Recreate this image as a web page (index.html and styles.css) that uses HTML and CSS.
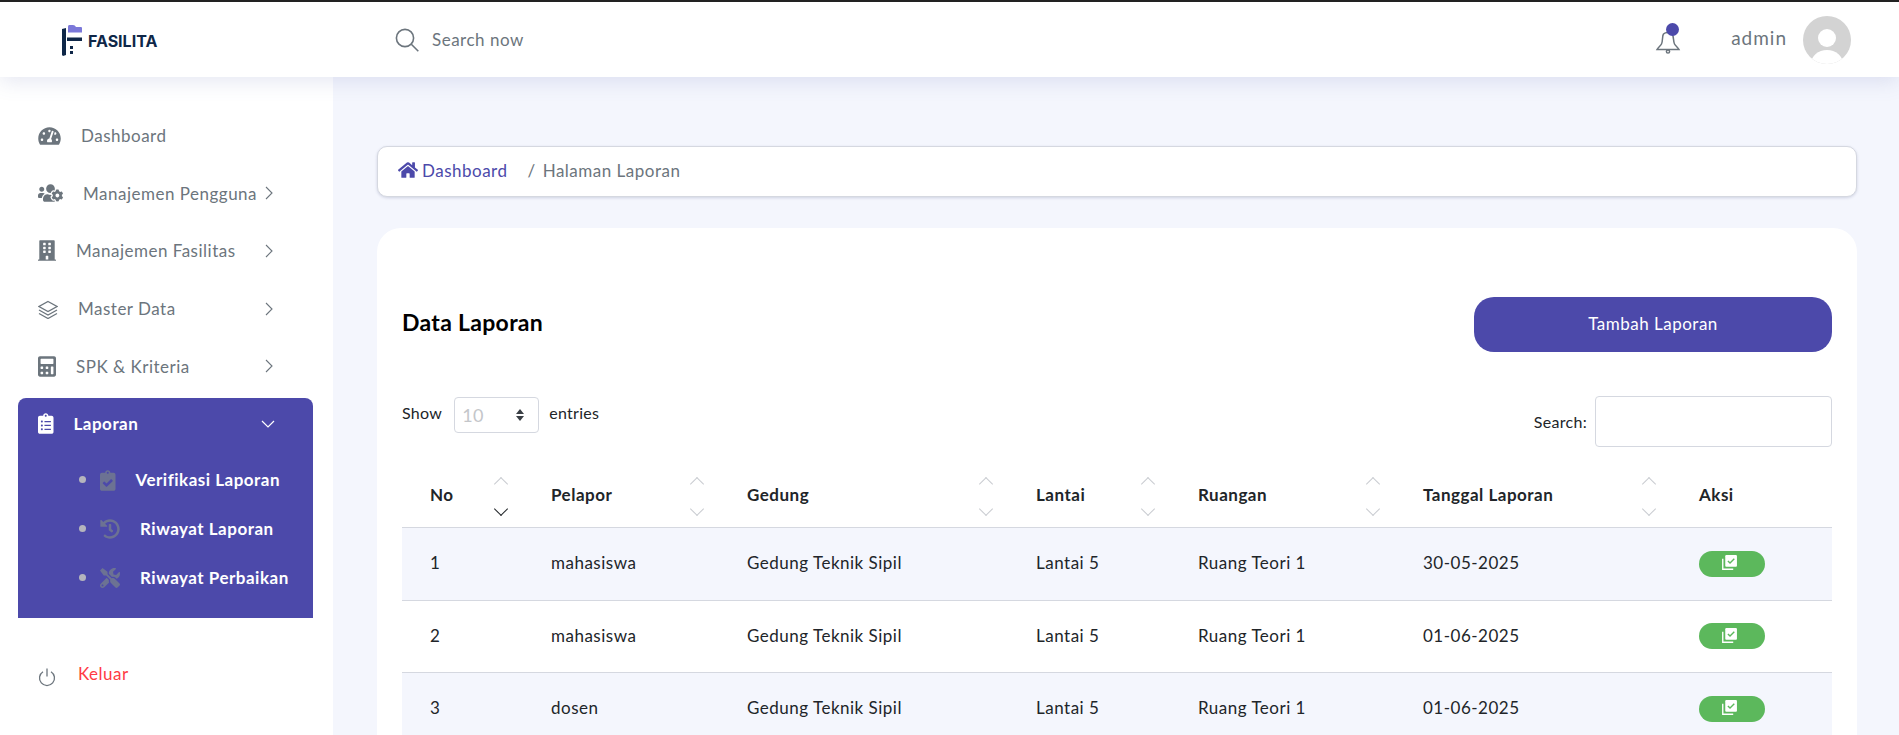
FILE: index.html
```html
<!DOCTYPE html>
<html lang="id">
<head>
<meta charset="utf-8">
<title>Data Laporan</title>
<link rel="stylesheet" href="styles.css">
</head>
<body>
<svg class="defs" aria-hidden="true">
  <defs>
    <symbol id="i-home" viewBox="0 0 576 512"><path d="M280.37 148.26L96 300.11V464a16 16 0 0 0 16 16l112.06-.29a16 16 0 0 0 15.92-16V368a16 16 0 0 1 16-16h64a16 16 0 0 1 16 16v95.64a16 16 0 0 0 16 16.05L464 480a16 16 0 0 0 16-16V300L295.67 148.26a12.19 12.19 0 0 0-15.3 0zM571.6 251.47L488 182.56V44.05a12 12 0 0 0-12-12h-56a12 12 0 0 0-12 12v72.61L318.47 43a48 48 0 0 0-61 0L4.34 251.47a12 12 0 0 0-1.6 16.9l25.5 31A12 12 0 0 0 45.15 301l235.22-193.74a12.19 12.19 0 0 1 15.3 0L530.9 301a12 12 0 0 0 16.9-1.6l25.5-31a12 12 0 0 0-1.7-16.93z"/></symbol>
    <symbol id="i-chev" viewBox="0 0 8 14"><path d="M1 1l6 6-6 6" fill="none" stroke="currentColor" stroke-width="1.1"/></symbol>
    <symbol id="i-check" viewBox="0 0 16 16"><path d="M1 4.500h1.300v9.200h9.200V15H1z" fill="#fff"/><rect x="4" y="1" width="11" height="11" rx="1" fill="#fff"/><path d="M6.500 6.500l2 2 4-4" fill="none" stroke="#5cb85c" stroke-width="1.300"/></symbol>
  </defs>
</svg>

<header class="topbar">
  <div class="brand">
    <svg class="brand-mark" viewBox="0 0 22 34"><path d="M8 2h4a4 4 0 0 1 3 2h5a1 1 0 0 1 1 1v4.500H7V4a2 2 0 0 1 1-2z" fill="#7b78d9"/><path d="M1 6l4-1v27l-3 1-1-1zM6 14.500h15v3.500H6zM9 23h3v3H9zM9 28h3v3H9z" fill="#0f2748"/></svg>
    <span class="brand-name">FASILITA</span>
  </div>
  <div class="search-box">
    <svg class="search-icon" viewBox="0 0 24 24"><circle cx="10" cy="10" r="8.6"/><path d="M16.3 16.3l7 7"/></svg>
    <span>Search now</span>
  </div>
  <div class="bell">
    <svg class="bell-icon" viewBox="0 0 24 24"><path d="M7.500 5C6 7 7 12 5.500 15 4.500 17 2 18.500 1 20.500h22c-1-2-3.500-3.500-4.500-5.500C17 12 18 7 16 5c-2-2-6.500-2-8.500 0z"/><circle cx="12" cy="22.500" r="1.600"/></svg>
    <span class="bell-dot"></span>
  </div>
  <span class="user-name">admin</span>
  <svg class="avatar" viewBox="0 0 48 48"><defs><clipPath id="av"><circle cx="24" cy="24" r="24"/></clipPath></defs><circle cx="24" cy="24" r="24" fill="#d3d3d3"/><g clip-path="url(#av)" fill="#fff"><circle cx="24" cy="22" r="9"/><ellipse cx="24" cy="48" rx="16" ry="14"/></g></svg>
</header>

<div class="layout">
  <aside class="sidebar">
    <nav>
      <a class="nav-item"><svg class="ic w23" viewBox="0 0 576 512"><path d="M288 32C128.94 32 0 160.94 0 320c0 52.8 14.25 102.26 39.06 144.8 5.61 9.62 16.3 15.2 27.44 15.2h443c11.14 0 21.83-5.58 27.44-15.2C561.75 422.26 576 372.8 576 320c0-159.06-128.94-288-288-288zm0 64c14.71 0 26.58 10.13 30.32 23.65-1.11 2.26-2.64 4.23-3.45 6.67l-9.22 27.67c-5.13 3.49-10.97 6.01-17.64 6.01-17.67 0-32-14.33-32-32S270.33 96 288 96zM96 384c-17.67 0-32-14.33-32-32s14.33-32 32-32 32 14.33 32 32-14.33 32-32 32zm48-160c-17.67 0-32-14.33-32-32s14.33-32 32-32 32 14.33 32 32-14.33 32-32 32zm246.77-72.41l-61.33 184C343.13 347.33 352 364.54 352 384c0 11.72-3.38 22.55-8.88 32H232.88c-5.5-9.45-8.88-20.28-8.88-32 0-33.94 26.5-61.43 59.9-63.59l61.34-184.01c4.17-12.56 17.73-19.45 30.36-15.17 12.57 4.19 19.35 17.79 15.17 30.36zm14.66 57.2l15.52-46.55c3.47-1.29 7.13-2.23 11.05-2.23 17.67 0 32 14.33 32 32s-14.33 32-32 32c-11.38-.01-20.89-6.28-26.57-15.22zM480 384c-17.67 0-32-14.33-32-32s14.33-32 32-32 32 14.33 32 32-14.33 32-32 32z"/></svg><span>Dashboard</span></a>
      <a class="nav-item"><svg class="ic w25" viewBox="0 0 640 512"><path d="M610.5 341.3c2.6-14.1 2.6-28.5 0-42.6l25.8-14.9c3-1.7 4.3-5.2 3.3-8.5-6.7-21.6-18.2-41.2-33.2-57.4-2.3-2.5-6-3.1-9-1.4l-25.8 14.9c-10.9-9.3-23.4-16.5-36.9-21.3v-29.8c0-3.4-2.4-6.4-5.7-7.1-22.3-5-45-4.8-66.2 0-3.3.7-5.7 3.7-5.7 7.1v29.8c-13.5 4.8-26 12-36.9 21.3l-25.8-14.9c-2.9-1.7-6.7-1.1-9 1.4-15 16.2-26.5 35.8-33.2 57.4-1 3.3.4 6.8 3.3 8.5l25.8 14.9c-2.6 14.1-2.6 28.5 0 42.6l-25.8 14.9c-3 1.7-4.3 5.2-3.3 8.5 6.7 21.6 18.2 41.1 33.2 57.4 2.3 2.5 6 3.1 9 1.4l25.8-14.9c10.9 9.3 23.4 16.5 36.9 21.3v29.8c0 3.4 2.4 6.4 5.7 7.1 22.3 5 45 4.8 66.2 0 3.3-.7 5.7-3.7 5.7-7.1v-29.8c13.5-4.8 26-12 36.9-21.3l25.8 14.9c2.9 1.7 6.7 1.1 9-1.4 15-16.2 26.5-35.8 33.2-57.4 1-3.3-.4-6.8-3.3-8.5l-25.8-14.9zM496 368.5c-26.8 0-48.5-21.8-48.5-48.5s21.8-48.5 48.5-48.5 48.5 21.8 48.5 48.5-21.7 48.5-48.5 48.5zM96 224c35.3 0 64-28.7 64-64s-28.7-64-64-64-64 28.7-64 64 28.7 64 64 64zm224 32c1.9 0 3.7-.5 5.6-.6 8.3-21.7 20.5-42.1 36.3-59.2 7.4-8 17.9-12.6 28.9-12.6 6.9 0 13.7 1.8 19.6 5.3l7.9 4.6c.8-.5 1.6-.9 2.4-1.4 7-14.6 11.2-30.8 11.2-48 0-61.9-50.1-112-112-112S208 82.1 208 144c0 61.9 50.1 112 112 112zm105.2 194.5c-2.3-1.2-4.6-2.6-6.8-3.9-8.2 4.8-15.3 9.8-27.5 9.8-10.9 0-21.4-4.6-28.9-12.6-18.3-19.8-32.3-43.9-40.2-69.6-10.7-34.5 24.9-49.7 25.8-50.3-.1-2.6-.1-5.2 0-7.8l-7.9-4.6c-3.8-2.2-7-5-9.8-8.1-3.3.2-6.5.6-9.8.6-24.6 0-47.6-6-68.5-16h-8.3C179.6 288 128 339.6 128 403.2V432c0 26.5 21.5 48 48 48h255.4c-3.7-6-6.2-12.8-6.2-20.3v-9.200zM173.1 274.6C161.5 263.1 145.6 256 128 256H64c-35.3 0-64 28.7-64 64v32c0 17.7 14.3 32 32 32h65.9c6.3-47.4 34.9-87.3 75.2-109.4z"/></svg><span>Manajemen Pengguna</span><svg class="chev"><use href="#i-chev"/></svg></a>
      <a class="nav-item"><svg class="ic w18" viewBox="0 0 448 512"><path d="M436 480h-20V24c0-13.255-10.745-24-24-24H56C42.745 0 32 10.745 32 24v456H12c-6.627 0-12 5.373-12 12v20h448v-20c0-6.627-5.373-12-12-12zM128 76c0-6.627 5.373-12 12-12h40c6.627 0 12 5.373 12 12v40c0 6.627-5.373 12-12 12h-40c-6.627 0-12-5.373-12-12V76zm0 96c0-6.627 5.373-12 12-12h40c6.627 0 12 5.373 12 12v40c0 6.627-5.373 12-12 12h-40c-6.627 0-12-5.373-12-12v-40zm52 148h-40c-6.627 0-12-5.373-12-12v-40c0-6.627 5.373-12 12-12h40c6.627 0 12 5.373 12 12v40c0 6.627-5.373 12-12 12zm76 160h-64v-84c0-6.627 5.373-12 12-12h40c6.627 0 12 5.373 12 12v84zm64-172c0 6.627-5.373 12-12 12h-40c-6.627 0-12-5.373-12-12v-40c0-6.627 5.373-12 12-12h40c6.627 0 12 5.373 12 12v40zm0-96c0 6.627-5.373 12-12 12h-40c-6.627 0-12-5.373-12-12v-40c0-6.627 5.373-12 12-12h40c6.627 0 12 5.373 12 12v40zm0-96c0 6.627-5.373 12-12 12h-40c-6.627 0-12-5.373-12-12V76c0-6.627 5.373-12 12-12h40c6.627 0 12 5.373 12 12v40z"/></svg><span>Manajemen Fasilitas</span><svg class="chev"><use href="#i-chev"/></svg></a>
      <a class="nav-item"><svg class="ic w20 line" viewBox="0 0 20 20"><path d="M10 2.500l9 5-9 5-9-5zM1 11l9 5 9-5M1 14.500l9 5 9-5"/></svg><span>Master Data</span><svg class="chev"><use href="#i-chev"/></svg></a>
      <a class="nav-item"><svg class="ic w18" viewBox="0 0 448 512"><path d="M400 0H48C22.400 0 0 22.400 0 48v416c0 25.600 22.400 48 48 48h352c25.600 0 48-22.400 48-48V48c0-25.600-22.400-48-48-48zM128 435.200c0 6.400-6.400 12.800-12.800 12.800H76.800c-6.400 0-12.800-6.400-12.800-12.800v-38.400c0-6.400 6.400-12.800 12.800-12.800h38.400c6.400 0 12.800 6.400 12.800 12.800v38.400zm0-128c0 6.400-6.400 12.800-12.800 12.800H76.800c-6.400 0-12.800-6.400-12.800-12.800v-38.400c0-6.400 6.400-12.800 12.800-12.800h38.400c6.400 0 12.800 6.400 12.800 12.800v38.400zm128 128c0 6.400-6.400 12.800-12.800 12.800h-38.400c-6.400 0-12.800-6.400-12.800-12.800v-38.400c0-6.400 6.400-12.800 12.800-12.800h38.400c6.400 0 12.800 6.400 12.800 12.800v38.400zm0-128c0 6.400-6.400 12.800-12.800 12.800h-38.400c-6.400 0-12.800-6.400-12.800-12.800v-38.400c0-6.400 6.400-12.800 12.800-12.800h38.400c6.400 0 12.800 6.400 12.800 12.800v38.400zm128 128c0 6.400-6.400 12.800-12.800 12.800h-38.400c-6.400 0-12.800-6.400-12.800-12.800V268.800c0-6.400 6.400-12.800 12.800-12.800h38.400c6.400 0 12.800 6.400 12.800 12.800v166.400zm0-256c0 6.400-6.400 12.800-12.800 12.800H76.800c-6.400 0-12.800-6.400-12.800-12.800V76.800C64 70.400 70.400 64 76.800 64h294.400c6.400 0 12.800 6.400 12.800 12.800v102.400z"/></svg><span>SPK &amp; Kriteria</span><svg class="chev"><use href="#i-chev"/></svg></a>
      <div class="nav-group">
        <a class="nav-head"><svg class="ic w15" viewBox="0 0 384 512"><path d="M336 64h-80c0-35.300-28.700-64-64-64s-64 28.700-64 64H48C21.500 64 0 85.500 0 112v352c0 26.500 21.500 48 48 48h288c26.500 0 48-21.500 48-48V112c0-26.500-21.500-48-48-48zM96 424c-13.300 0-24-10.700-24-24s10.700-24 24-24 24 10.700 24 24-10.700 24-24 24zm0-96c-13.300 0-24-10.700-24-24s10.700-24 24-24 24 10.700 24 24-10.700 24-24 24zm0-96c-13.300 0-24-10.700-24-24s10.700-24 24-24 24 10.700 24 24-10.700 24-24 24zm96-192c13.300 0 24 10.700 24 24s-10.700 24-24 24-24-10.700-24-24 10.700-24 24-24zm128 368c0 4.400-3.600 8-8 8H168c-4.400 0-8-3.600-8-8v-16c0-4.400 3.600-8 8-8h144c4.400 0 8 3.600 8 8v16zm0-96c0 4.400-3.600 8-8 8H168c-4.400 0-8-3.600-8-8v-16c0-4.400 3.600-8 8-8h144c4.400 0 8 3.600 8 8v16zm0-96c0 4.400-3.600 8-8 8H168c-4.400 0-8-3.600-8-8v-16c0-4.400 3.600-8 8-8h144c4.400 0 8 3.600 8 8v16z"/></svg><span>Laporan</span><svg class="chev-down" viewBox="0 0 14 8"><path d="M1 1l6 6 6-6"/></svg></a>
        <ul class="sub">
          <li><svg class="ic w15" viewBox="0 0 384 512"><path d="M336 64h-80c0-35.300-28.700-64-64-64s-64 28.700-64 64H48C21.500 64 0 85.500 0 112v352c0 26.500 21.500 48 48 48h288c26.500 0 48-21.500 48-48V112c0-26.500-21.500-48-48-48zM192 40c13.300 0 24 10.700 24 24s-10.700 24-24 24-24-10.700-24-24 10.700-24 24-24zm121.200 231.800l-143 141.800c-4.700 4.700-12.300 4.600-17-.1l-82.600-83.300c-4.700-4.700-4.600-12.300.1-17L99.100 285c4.700-4.700 12.300-4.600 17 .1l46 46.400 106-105.200c4.700-4.700 12.300-4.600 17 .1l28.200 28.400c4.700 4.800 4.600 12.300-.1 17z"/></svg><span>Verifikasi Laporan</span></li>
          <li><svg class="ic w20" viewBox="0 0 512 512"><path d="M504 255.531c.253 136.640-111.180 248.372-247.820 248.468-59.015.042-113.223-20.530-155.822-54.911-11.077-8.940-11.905-25.541-1.839-35.607l11.267-11.267c8.609-8.609 22.353-9.551 31.891-1.984C173.062 425.135 212.781 440 256 440c101.705 0 184-82.311 184-184 0-101.705-82.311-184-184-184-48.814 0-93.149 18.969-126.068 49.932l50.754 50.754c10.080 10.080 2.941 27.314-11.313 27.314H24c-8.837 0-16-7.163-16-16V38.627c0-14.254 17.234-21.393 27.314-11.314l49.372 49.372C129.209 34.136 189.552 8 256 8c136.810 0 247.747 110.780 248 247.531zm-180.912 78.784l9.823-12.630c8.138-10.463 6.253-25.542-4.210-33.679L288 256.349V152c0-13.255-10.745-24-24-24h-16c-13.255 0-24 10.745-24 24v135.651l65.409 50.874c10.463 8.137 25.541 6.253 33.679-4.210z"/></svg><span>Riwayat Laporan</span></li>
          <li><svg class="ic w20" viewBox="0 0 512 512"><path d="M501.100 395.700L384 278.600c-23.100-23.100-57.600-27.600-85.400-13.900L192 158.100V96L64 0 0 64l96 128h62.100l106.600 106.600c-13.600 27.800-9.200 62.300 13.900 85.400l117.100 117.100c14.600 14.600 38.200 14.600 52.700 0l52.700-52.700c14.500-14.600 14.500-38.200 0-52.700zM331.700 225c28.300 0 54.900 11 74.900 31l19.400 19.400c15.800-6.900 30.800-16.500 43.800-29.500 37.100-37.100 49.700-89.300 37.900-136.700-2.200-9-13.500-12.100-20.100-5.500l-74.400 74.400-67.900-11.300L334 98.900l74.400-74.400c6.600-6.600 3.400-17.900-5.700-20.200-47.400-11.700-99.600.9-136.600 37.900-28.500 28.500-41.900 66.100-41.200 103.600l82.100 82.100c8.100-1.900 16.500-2.900 24.700-2.900zm-103.900 82l-56.700-56.700L18.700 402.800c-25 25-25 65.500 0 90.500s65.500 25 90.500 0l123.600-123.600c-7.600-19.900-9.900-41.600-5-62.700zM64 472c-13.200 0-24-10.800-24-24 0-13.300 10.700-24 24-24s24 10.700 24 24c0 13.200-10.700 24-24 24z"/></svg><span>Riwayat Perbaikan</span></li>
        </ul>
      </div>
      <a class="nav-item logout"><svg class="ic w18 line" viewBox="0 0 18 18"><path d="M9 1v8M5 4.200a7.500 7.500 0 1 0 8 0"/></svg><span>Keluar</span></a>
    </nav>
  </aside>

  <main class="content">
    <div class="crumbs">
      <svg class="home"><use href="#i-home"/></svg>
      <a class="crumb-link">Dashboard</a>
      <span class="crumb-sep">/</span>
      <span>Halaman Laporan</span>
    </div>

    <section class="card">
      <div class="card-head">
        <h2>Data Laporan</h2>
        <button class="primary">Tambah Laporan</button>
      </div>
      <div class="controls">
        <div class="length">
          <span>Show</span>
          <div class="select"><span>10</span><svg viewBox="0 0 10 14"><path d="M5 1l4 5H1zM5 13L1 8h8z"/></svg></div>
          <span class="entries">entries</span>
        </div>
        <div class="filter">
          <span>Search:</span>
          <div class="filter-input"></div>
        </div>
      </div>
      <table>
        <colgroup>
          <col class="c1"><col class="c2"><col class="c3"><col class="c4"><col class="c5"><col class="c6"><col class="c7">
        </colgroup>
        <thead>
          <tr>
            <th class="sort active">No</th>
            <th class="sort">Pelapor</th>
            <th class="sort">Gedung</th>
            <th class="sort">Lantai</th>
            <th class="sort">Ruangan</th>
            <th class="sort">Tanggal Laporan</th>
            <th>Aksi</th>
          </tr>
        </thead>
        <tbody>
          <tr><td>1</td><td>mahasiswa</td><td>Gedung Teknik Sipil</td><td>Lantai 5</td><td>Ruang Teori 1</td><td>30-05-2025</td><td><span class="pill"><svg><use href="#i-check"/></svg></span></td></tr>
          <tr><td>2</td><td>mahasiswa</td><td>Gedung Teknik Sipil</td><td>Lantai 5</td><td>Ruang Teori 1</td><td>01-06-2025</td><td><span class="pill"><svg><use href="#i-check"/></svg></span></td></tr>
          <tr><td>3</td><td>dosen</td><td>Gedung Teknik Sipil</td><td>Lantai 5</td><td>Ruang Teori 1</td><td>01-06-2025</td><td><span class="pill"><svg><use href="#i-check"/></svg></span></td></tr>
        </tbody>
      </table>
    </section>
  </main>
</div>
</body>
</html>
```

FILE: styles.css
```css
* { box-sizing: border-box; }
html, body { height: 100%; }
body {
  margin: 0;
  height: 735px;
  overflow: hidden;
  background: #f4f6fd;
  font-family: Lato, "Noto Sans", sans-serif;
  font-size: 17px;
  letter-spacing: .5px;
  color: #212529;
}
.defs { display: none; }

.topbar {
  position: relative;
  z-index: 2;
  height: 77px;
  border-top: 2px solid #222;
  background: #fff;
  display: flex;
  align-items: center;
  padding-right: 48px;
  box-shadow: 0 4px 20px rgba(90, 100, 170, .16);
}
.brand { width: 395px; padding-left: 61px; display: flex; align-items: center; gap: 5px; }
.brand-mark { width: 22px; height: 34px; }
.brand-name { font-family: Inter, sans-serif; font-weight: 700; font-size: 16px; letter-spacing: 0; color: #0f2748; margin-top: 3px; }
.search-box { display: flex; align-items: center; gap: 13px; color: #6c757d; flex: 1; }
.search-icon { width: 24px; height: 24px; fill: none; stroke: #6c757d; stroke-width: 1.6; }
.bell { position: relative; width: 24px; height: 28px; margin-right: 51px; margin-top: 2px; }
.bell-icon { width: 24px; height: 28px; fill: none; stroke: #6c757d; stroke-width: 1.5; overflow: visible; }
.bell-dot { position: absolute; top: -4px; left: 10px; width: 13px; height: 13px; border-radius: 50%; background: #4c49aa; }
.user-name { color: #6c757d; font-size: 19px; letter-spacing: 1px; margin-right: 16px; margin-top: -5px; }
.avatar { width: 48px; height: 48px; }

.layout { display: flex; height: 658px; }
.sidebar { width: 333px; flex: none; background: #fff; padding: 30px 20px 0 18px; }
.nav-item {
  display: flex;
  align-items: center;
  height: 57.6px;
  padding: 0 40px 0 20px;
  color: #6c757d;
  white-space: nowrap;
}
.ic { fill: currentColor; height: 20px; flex: none; margin-right: 20px; }
.w23 { width: 23px; }
.w25 { width: 25px; }
.w18 { width: 18px; height: 23px; }
.w20 { width: 20px; }
.w15 { width: 15.500px; height: 21px; }
.line { fill: none; stroke: currentColor; stroke-width: 1.300; }
.chev { width: 8px; height: 14px; margin-left: auto; flex: none; }

.nav-group {
  margin-top: 3px;
  height: 220px;
  background: #4c49aa;
  border-radius: 8px 8px 0 0;
  color: #fff;
}
.nav-head {
  display: flex;
  align-items: center;
  height: 52px;
  padding: 0 38px 0 20px;
  font-weight: 700;
}
.nav-head .ic { color: #fff; }
.chev-down { width: 14px; height: 8px; margin-left: auto; fill: none; stroke: #fff; stroke-width: 1.200; }
.sub { list-style: none; margin: 6px 0 0; padding: 0 0 0 82px; }
.sub li {
  position: relative;
  display: flex;
  align-items: center;
  height: 49px;
  font-weight: 700;
  white-space: nowrap;
}
.sub li span { margin-top: -2px; }
.sub li::before {
  content: "";
  position: absolute;
  left: -21px;
  top: 20px;
  width: 7px;
  height: 7px;
  border-radius: 50%;
  background: #b5b5bd;
}
.sub .ic { color: #6c7293; }
.logout { margin-top: 27px; color: #ff3b45; }
.logout .ic { color: #6c757d; margin: 6px 22px 0 0; }
.logout span { margin-top: -1px; }

.content { flex: 1; min-width: 0; padding: 69px 42px 0 44px; }
.crumbs {
  height: 51px;
  display: flex;
  align-items: center;
  padding: 0 20px 3px;
  background: #fff;
  border: 1px solid #d5d8e0;
  border-radius: 10px;
  box-shadow: 0 1px 3px rgba(60, 70, 120, .2);
  color: #6c757d;
}
.home { width: 20px; height: 18px; fill: #4c49aa; margin-right: 4px; }
.crumb-link { color: #4c49aa; }
.crumb-sep { margin: 0 7px 0 20px; }

.card { margin-top: 31px; height: 600px; background: #fff; border-radius: 24px; padding: 69px 25px 0; }
.card-head { display: flex; align-items: center; justify-content: space-between; }
.card-head h2 { margin: 0 0 5px; font-size: 23px; font-weight: 700; letter-spacing: .3px; color: #000; }
.primary {
  width: 358px;
  height: 55px;
  padding: 0 0 2px;
  border: 0;
  border-radius: 20px;
  background: #4c49aa;
  color: #fff;
  font: inherit;
  letter-spacing: .5px;
}
.controls { display: flex; justify-content: space-between; margin-top: 44px; font-size: 16px; letter-spacing: .3px; }
.length { display: flex; align-items: center; gap: 12px; height: 36px; margin-top: 1px; }
.length > span { margin-top: -5px; }
.length > .entries { margin-left: -2px; }
.select {
  width: 85px;
  height: 36px;
  display: flex;
  align-items: center;
  justify-content: space-between;
  padding: 0 13px 0 7px;
  border: 1px solid #d5d8e0;
  border-radius: 4px;
  color: #c4c6ca;
  font-size: 18px;
}
.select svg { width: 10px; height: 14px; fill: #3a3f45; }
.filter { display: flex; align-items: center; gap: 8px; }
.filter-input { width: 237px; height: 51px; border: 1px solid #d5d8e0; border-radius: 4px; }

table { width: 1430px; margin-top: 13.500px; border-collapse: collapse; table-layout: fixed; }
.c1 { width: 121px; }
.c2 { width: 196px; }
.c3 { width: 289px; }
.c4 { width: 162px; }
.c5 { width: 225px; }
.c6 { width: 276px; }
.c7 { width: 161px; }
th {
  position: relative;
  height: 67px;
  padding: 2px 28px 0;
  text-align: left;
  font-weight: 700;
  border-bottom: 1px solid #d5d8e0;
}
.sort::before, .sort::after {
  content: "";
  position: absolute;
  right: 17px;
  width: 9px;
  height: 9px;
  border: solid #c9ccd1;
  border-width: 1.200px 0 0 1.200px;
  transform: rotate(45deg);
}
.sort::before { top: 18px; }
.sort::after { top: 43px; transform: rotate(225deg); }
.sort.active::after { border-color: #212529; }
td { height: 72.500px; padding: 0 28px 2px; border-bottom: 1px solid #d5d8e0; white-space: nowrap; }
td:last-child { padding-bottom: 0; }
tbody tr:nth-child(odd) { background: #f4f6fd; }
.pill {
  width: 66px;
  height: 26px;
  display: inline-flex;
  align-items: center;
  justify-content: center;
  border-radius: 13px;
  background: #5cb85c;
  vertical-align: middle;
}
.pill svg { width: 17px; height: 17px; margin: 0 5px 2px 0; }
```
